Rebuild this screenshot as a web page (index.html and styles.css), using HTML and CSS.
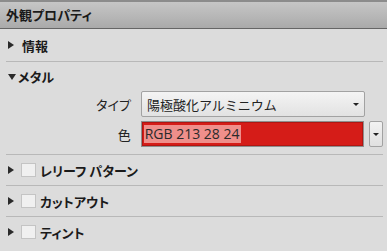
FILE: index.html
```html
<!DOCTYPE html>
<html lang="ja">
<head>
    <meta charset="UTF-8">
    <title>外観プロパティ</title>
    <link rel="stylesheet" href="styles.css">
</head>
<body>
    <div class="panel">
        <div class="header">外観プロパティ</div>

        <div class="section">
            <div class="row">
                <span class="arrow right"></span>
                <span class="title">情報</span>
            </div>
        </div>

        <div class="section open">
            <div class="row metal">
                <span class="arrow down"></span>
                <span class="title">メタル</span>
            </div>
            <div class="field">
                <label class="label">タイプ</label>
                <div class="select">
                    <span>陽極酸化アルミニウム</span>
                    <span class="caret"></span>
                </div>
            </div>
            <div class="field">
                <label class="label">色</label>
                <div class="swatch"><span class="value">RGB 213 28 24</span></div>
                <div class="drop"><span class="caret"></span></div>
            </div>
        </div>

        <div class="section">
            <div class="row">
                <span class="arrow right"></span>
                <span class="check"></span>
                <span class="title">レリーフ パターン</span>
            </div>
        </div>

        <div class="section">
            <div class="row">
                <span class="arrow right"></span>
                <span class="check"></span>
                <span class="title">カットアウト</span>
            </div>
        </div>

        <div class="section last">
            <div class="row">
                <span class="arrow right"></span>
                <span class="check"></span>
                <span class="title">ティント</span>
            </div>
        </div>
    </div>
</body>
</html>
```

FILE: styles.css
```css
* {
    margin: 0;
    padding: 0;
    box-sizing: border-box;
}

body {
    font-family: "Noto Sans CJK JP", "Noto Sans", sans-serif;
    font-size: 13px;
    font-feature-settings: "palt";
    background: #dcdcdc;
    color: #1a1a1a;
}

.panel {
    width: 387px;
    height: 251px;
    border-top: 2px solid #8c8c8c;
    overflow: hidden;
}

.header {
    height: 27px;
    padding-left: 6px;
    background: linear-gradient(#c6c6c6, #aaaaaa);
    border-bottom: 1px solid #666;
    font-weight: bold;
    line-height: 26px;
}

.section {
    margin: 0 4px 0 6px;
    border-bottom: 1px solid #b8b8b8;
}

.section.last {
    border-bottom: none;
}

.section.open {
    padding-bottom: 7px;
}

.row {
    height: 32px;
    display: flex;
    align-items: center;
    padding-left: 2px;
}

.section + .section .row {
    height: 30px;
}

.section.open .row.metal {
    height: 29px;
}

.arrow {
    width: 0;
    height: 0;
    margin-right: 8px;
}

.arrow.right {
    border-top: 4px solid transparent;
    border-bottom: 4px solid transparent;
    border-left: 6px solid #2a2a2a;
}

.arrow.down {
    border-left: 4px solid transparent;
    border-right: 4px solid transparent;
    border-top: 6px solid #2a2a2a;
    margin-right: 2px;
}

.title {
    font-weight: bold;
}

.check {
    width: 15px;
    height: 14px;
    background: #f0f0f0;
    border: 1px solid #c4c4c4;
    margin: 0 4px 0 -1px;
}

.field {
    display: flex;
    align-items: center;
    height: 26px;
    margin-bottom: 4px;
}

.field:last-child {
    margin-bottom: 0;
}

.label {
    width: 135px;
    text-align: right;
    padding-right: 10px;
    color: #222;
}

.select {
    width: 224px;
    height: 26px;
    display: flex;
    align-items: center;
    justify-content: space-between;
    padding: 0 5px 0 5px;
    border: 1px solid #a2a2a2;
    border-radius: 2px;
    background: linear-gradient(#f4f4f4, #e2e2e2);
    color: #222;
    font-feature-settings: normal;
}

.caret {
    width: 0;
    height: 0;
    border-left: 3px solid transparent;
    border-right: 3px solid transparent;
    border-top: 3px solid #222;
}

.swatch {
    width: 224px;
    height: 26px;
    display: flex;
    align-items: center;
    padding-left: 2px;
    background: #d51c18;
    border: 1px solid #8e8e8e;
    box-shadow: inset 0 0 0 1px #b01612;
}

.value {
    font-family: "Open Sans", "Noto Sans", sans-serif;
    font-size: 14px;
    background: #ef8f8b;
    color: #2a2a2a;
    padding: 0 1px;
    line-height: 18px;
    width: 97px;
    white-space: nowrap;
}

.drop {
    width: 14px;
    height: 26px;
    margin-left: 5px;
    display: flex;
    align-items: center;
    justify-content: center;
    border: 1px solid #a2a2a2;
    border-radius: 2px;
    background: linear-gradient(#f2f2f2, #e0e0e0);
}
```
